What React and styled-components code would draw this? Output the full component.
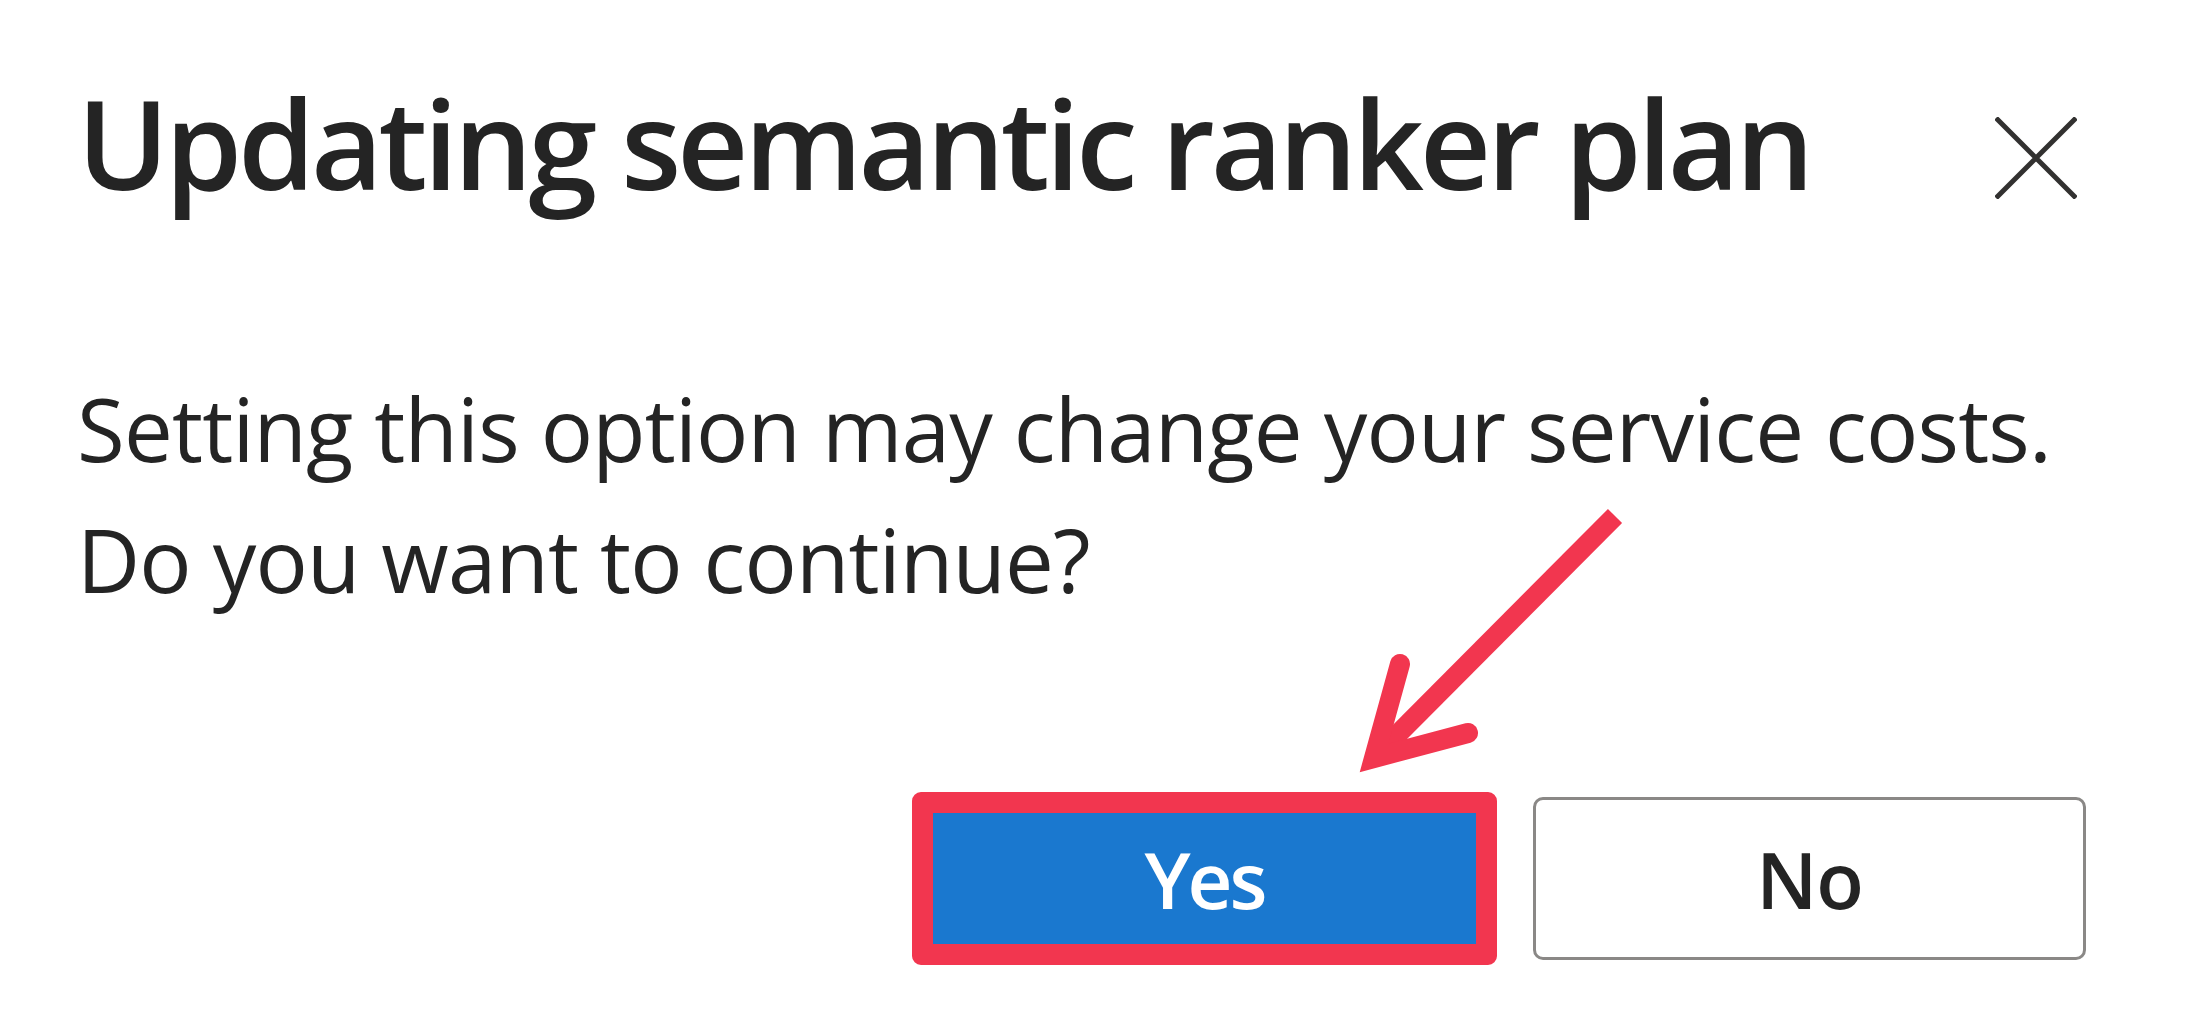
import React from 'react';
import styled, { createGlobalStyle } from 'styled-components';

const GlobalStyle = createGlobalStyle`
  html, body {
    margin: 0;
    padding: 0;
    background: #ffffff;
  }

  body {
    font-family: 'Open Sans', 'Noto Sans', 'Liberation Sans', sans-serif;
    color: #242424;
  }
`;

const Page = styled.div`
  position: relative;
  width: 2185px;
  height: 1031px;
  box-sizing: border-box;
  padding: 0 99px 0 77px;
  display: flex;
  flex-direction: column;
  overflow: hidden;
`;

const Header = styled.header`
  display: flex;
  justify-content: space-between;
  align-items: flex-start;
  padding-top: 66px;
`;

const Title = styled.h1`
  margin: 0;
  font-size: 124px;
  font-weight: 600;
  line-height: 151px;
  letter-spacing: -4.2px;
  white-space: nowrap;
  color: #242424;
`;

const CloseButton = styled.button`
  display: flex;
  padding: 0;
  margin: 51px 9px 0 0;
  border: none;
  background: transparent;
  color: #323130;
  cursor: pointer;
`;

const Message = styled.p`
  margin: 146px 0 0;
  font-size: 87px;
  line-height: 131px;
  letter-spacing: -0.8px;
  white-space: nowrap;
  color: #242424;
`;

const Footer = styled.footer`
  display: flex;
  justify-content: flex-end;
  align-items: center;
  gap: 36px;
  margin-top: 167px;
`;

const Button = styled.button`
  box-sizing: border-box;
  display: flex;
  align-items: center;
  justify-content: center;
  padding: 0;
  font-family: inherit;
  font-size: 78px;
  font-weight: 600;
  letter-spacing: ${({ primary }) => (primary ? '-3px' : '-1px')};
  cursor: pointer;
  width: ${({ primary }) => (primary ? '585px' : '553px')};
  height: ${({ primary }) => (primary ? '173px' : '163px')};
  background: ${({ primary }) => (primary ? '#1a78cf' : '#ffffff')};
  color: ${({ primary }) => (primary ? '#ffffff' : '#242424')};
  border: ${({ primary }) => (primary ? '21px solid #f2364f' : '3px solid #8a8886')};
  border-radius: ${({ primary }) => (primary ? '9px' : '10px')};
`;

const Annotation = styled.svg`
  position: absolute;
  top: 0;
  left: 0;
  pointer-events: none;
`;

const CloseIcon = () => (
  <svg width="82" height="82" viewBox="0 0 82 82" fill="none">
    <path d="M1 1 L81 81 M81 1 L1 81" stroke="currentColor" strokeWidth="5" />
  </svg>
);

const Arrow = () => (
  <Annotation width="2185" height="1031" viewBox="0 0 2185 1031" fill="none">
    <line x1="1615" y1="516" x2="1380" y2="752" stroke="#f2364f" strokeWidth="20" />
    <polyline
      points="1400,664 1374,758 1468,733"
      stroke="#f2364f"
      strokeWidth="20"
      strokeLinecap="round"
      strokeLinejoin="miter"
    />
  </Annotation>
);

const App = () => (
  <>
    <GlobalStyle />
    <Page>
      <Header>
        <Title>Updating semantic ranker plan</Title>
        <CloseButton aria-label="Close">
          <CloseIcon />
        </CloseButton>
      </Header>
      <Message>
        Setting this option may change your service costs.
        <br />
        Do you want to continue?
      </Message>
      <Footer>
        <Button primary>Yes</Button>
        <Button>No</Button>
      </Footer>
      <Arrow />
    </Page>
  </>
);

export default App;
